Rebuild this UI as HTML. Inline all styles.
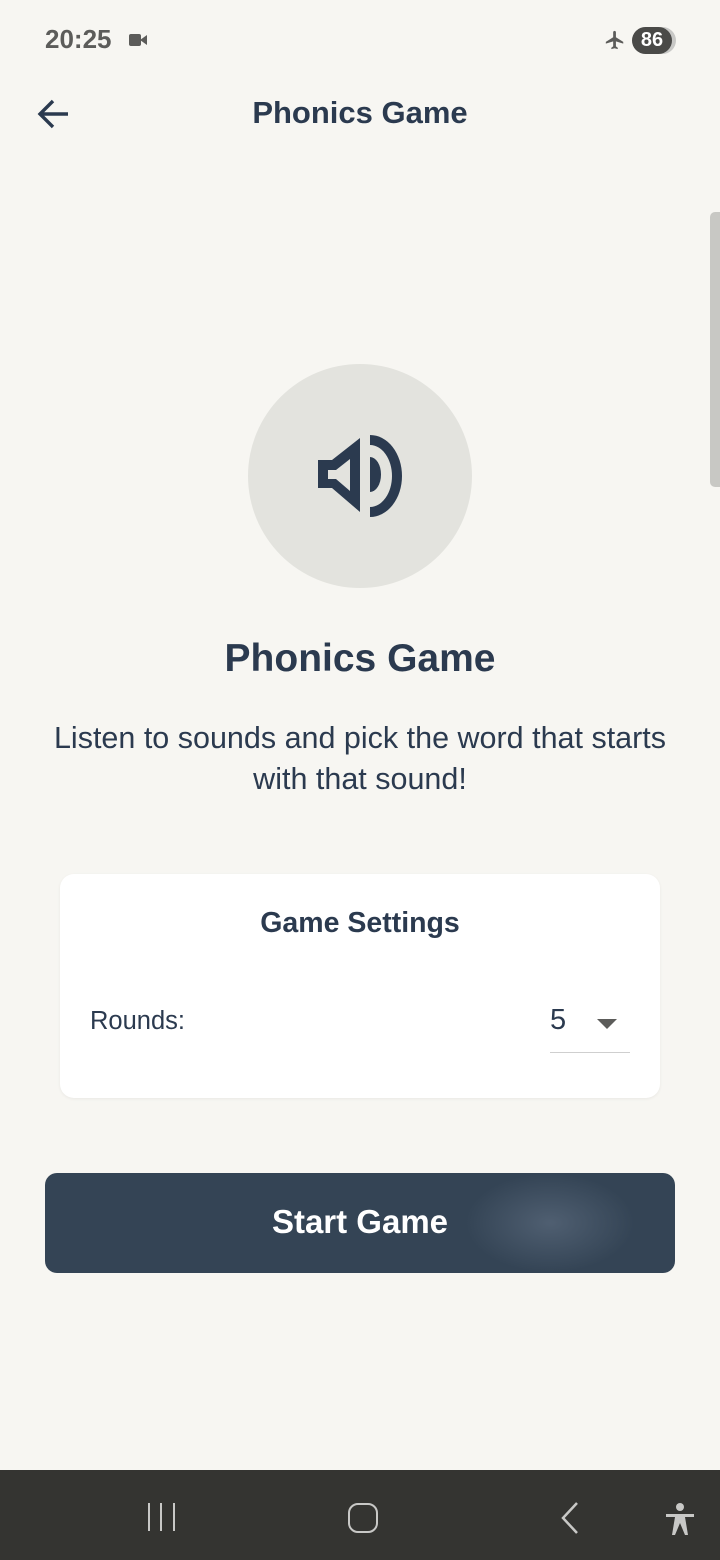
<!DOCTYPE html>
<html><head><meta charset="utf-8"><style>
*{margin:0;padding:0;box-sizing:border-box}
body{width:720px;height:1560px;background:#f7f6f2;font-family:"Liberation Sans",sans-serif;color:#2b3a4f;position:relative;overflow:hidden}
.abs{position:absolute}
.c{text-align:center;left:0;width:720px;white-space:nowrap}
</style></head><body>
<div class="abs" style="left:45px;top:24px;font-size:26px;font-weight:bold;color:#5c5c5a">20:25</div>
<div class="abs" style="left:129px;top:34px;width:12px;height:12px;background:#5c5c5a;border-radius:2px"></div>
<div class="abs" style="left:140px;top:35px;width:0;height:0;border-top:5px solid transparent;border-bottom:5px solid transparent;border-right:7px solid #5c5c5a"></div>
<svg class="abs" style="left:604px;top:28px" width="22" height="24" viewBox="0 0 24 24"><path fill="#5c5c5a" d="M21 16v-2l-8-5V3.5c0-.83-.67-1.5-1.5-1.5S10 2.670 10 3.5V9l-8 5v2l8-2.5V19l-2 1.5V22l3.5-1 3.5 1v-1.5L13 19v-5.5l8 2.5z"/></svg>
<div class="abs" style="left:632px;top:27px;width:44px;height:27px;border-radius:14px;background:#c8c8c6"></div>
<div class="abs" style="left:632px;top:27px;width:40px;height:27px;border-radius:14px;background:#4a4a48;color:#fff;font-size:20px;font-weight:bold;text-align:center;line-height:27px">86</div>
<svg class="abs" style="left:34px;top:96px" width="38" height="36" viewBox="0 0 38 36"><path d="M34 18H7M19 5L6 18l13 13" stroke="#2b3a4f" stroke-width="3.4" fill="none"/></svg>
<div class="abs c" style="top:95px;font-size:31px;font-weight:bold">Phonics Game</div>
<div class="abs" style="left:710px;top:212px;width:10px;height:275px;background:#c8c8c4;border-radius:5px 0 0 5px"></div>
<div class="abs" style="left:248px;top:364px;width:224px;height:224px;border-radius:50%;background:#e3e3de"></div>
<svg class="abs" style="left:240px;top:360px" width="240" height="240" viewBox="0 0 240 240">
<path fill="#2b3a4f" fill-rule="evenodd" d="M78 100H92L120 78V152L92 128H78ZM88 110V119H96L110 131V99L96 110Z"/>
<path fill="#2b3a4f" d="M130 75A32 41 0 0 1 130 157V147A22 31 0 0 0 130 85Z"/>
<path fill="#2b3a4f" d="M130 97A11 17.5 0 0 1 130 132Z"/>
</svg>
<div class="abs c" style="top:637px;font-size:39px;font-weight:bold">Phonics Game</div>
<div class="abs c" style="top:718px;font-size:30.5px;line-height:41px">Listen to sounds and pick the word that starts<br>with that sound!</div>
<div class="abs" style="left:60px;top:874px;width:600px;height:224px;background:#fff;border-radius:14px;box-shadow:0 1px 3px rgba(0,0,0,0.06)"></div>
<div class="abs c" style="top:907px;font-size:28.5px;font-weight:bold">Game Settings</div>
<div class="abs" style="left:90px;top:1007px;font-size:25.5px">Rounds:</div>
<div class="abs" style="left:550px;top:1004px;font-size:29px">5</div>
<div class="abs" style="left:597px;top:1019px;width:0;height:0;border-left:10px solid transparent;border-right:10px solid transparent;border-top:10px solid #5c5c5a"></div>
<div class="abs" style="left:550px;top:1052px;width:80px;height:1px;background:#cfcfcf"></div>
<div class="abs" style="left:45px;top:1173px;width:630px;height:100px;border-radius:12px;background:#344455;overflow:hidden"><div style="position:absolute;left:420px;top:0;width:170px;height:100px;background:radial-gradient(ellipse at center,rgba(120,135,155,0.4),rgba(52,68,85,0) 70%)"></div></div>
<div class="abs c" style="top:1203px;font-size:33px;font-weight:bold;color:#fff">Start Game</div>
<div class="abs" style="left:0;top:1470px;width:720px;height:90px;background:#343431"></div>
<div class="abs" style="left:148px;top:1503px;width:2px;height:28px;background:#c8c8c6"></div>
<div class="abs" style="left:160px;top:1503px;width:2px;height:28px;background:#c8c8c6"></div>
<div class="abs" style="left:173px;top:1503px;width:2px;height:28px;background:#c8c8c6"></div>
<div class="abs" style="left:348px;top:1503px;width:30px;height:30px;border:2.5px solid #c8c8c6;border-radius:10px"></div>
<svg class="abs" style="left:550px;top:1500px" width="30" height="36"><path d="M27 3L13 18l14 15" stroke="#c8c8c6" stroke-width="2.5" fill="none"/></svg>
<svg class="abs" style="left:664px;top:1502px" width="32" height="36" viewBox="0 0 32 36"><circle cx="16" cy="5" r="4" fill="#c8c8c6"/><path d="M2 12h28v3h-9l3 18h-3l-5-12-5 12H8l3-18H2z" fill="#c8c8c6"/></svg>
</body></html>
